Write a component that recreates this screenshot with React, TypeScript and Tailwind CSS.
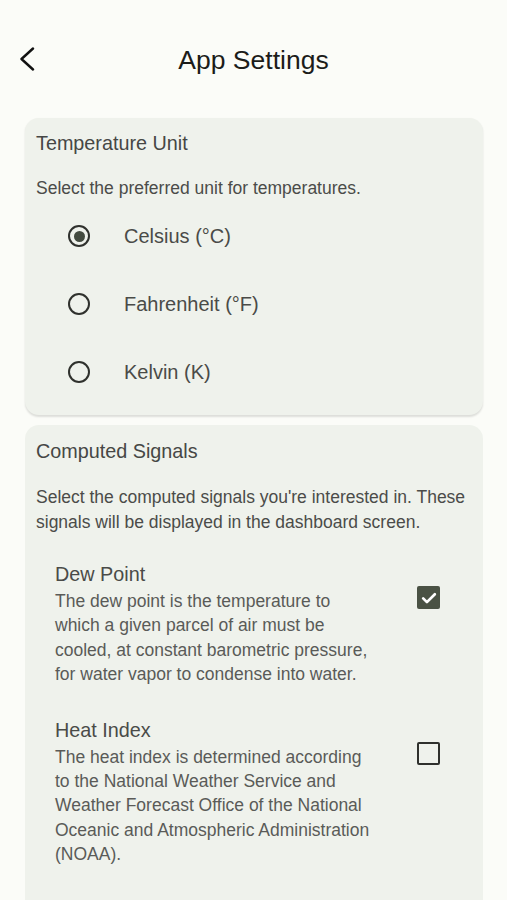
import React, { useState } from 'react';

const units = ['Celsius (°C)', 'Fahrenheit (°F)', 'Kelvin (K)'];

const signals = [
  {
    title: 'Dew Point',
    description:
      'The dew point is the temperature to which a given parcel of air must be cooled, at constant barometric pressure, for water vapor to condense into water.',
    checked: true,
  },
  {
    title: 'Heat Index',
    description:
      'The heat index is determined according to the National Weather Service and Weather Forecast Office of the National Oceanic and Atmospheric Administration (NOAA).',
    checked: false,
  },
];

function Radio({ selected }: { selected: boolean }) {
  return (
    <span className="flex h-[22px] w-[22px] items-center justify-center rounded-full border-[2.5px] border-[#2f312d]">
      {selected && <span className="h-[11px] w-[11px] rounded-full bg-[#434a3f]" />}
    </span>
  );
}

function Checkbox({ checked }: { checked: boolean }) {
  if (checked) {
    return (
      <span className="flex h-[23px] w-[23px] items-center justify-center rounded-[2px] bg-[#4a5244]">
        <svg viewBox="0 0 24 24" className="h-[20px] w-[20px]" fill="none" stroke="white" strokeWidth="3.2" strokeLinecap="round" strokeLinejoin="round">
          <path d="M5 12.5l4.5 4.5L19 7.5" />
        </svg>
      </span>
    );
  }
  return <span className="block h-[23px] w-[23px] rounded-[2px] border-[2.5px] border-[#2f312d]" />;
}

export default function App() {
  const [unit, setUnit] = useState(0);

  return (
    <div className="min-h-[900px] bg-[#fbfcf8] font-['Liberation_Sans',Arial,sans-serif] text-[#1c1c1a]">
      <header className="relative flex h-[118px] items-start pt-[44px]">
        <button className="absolute left-[19px] top-[47px] p-0">
          <svg viewBox="0 0 16 24" className="h-[24px] w-[16px]" fill="none" stroke="#111" strokeWidth="2.4" strokeLinecap="round" strokeLinejoin="round">
            <path d="M14 1.5L2.5 12L14 22.5" />
          </svg>
        </button>
        <h1 className="w-full text-center text-[26.5px] leading-[32px]">App Settings</h1>
      </header>

      <div className="flex flex-col gap-[10px] pl-[25px] pr-[24px]">
        <section className="rounded-[14px] bg-[#eff2ec] pb-[9px] pt-[12px] shadow-[0_1.5px_2px_rgba(0,0,0,0.12)]">
          <h2 className="px-[11px] text-[19.8px] leading-[26px] text-[#464745]">Temperature Unit</h2>
          <p className="mt-[21px] px-[11px] text-[17.5px] leading-[22px] text-[#4b4c49]">
            Select the preferred unit for temperatures.
          </p>
          <div className="mt-[3px] flex flex-col">
            {units.map((u, i) => (
              <button
                key={u}
                onClick={() => setUnit(i)}
                className="flex h-[68px] items-center text-left"
              >
                <span className="ml-[43px] mr-[34px]">
                  <Radio selected={unit === i} />
                </span>
                <span className="text-[20px] text-[#4a4b48]">{u}</span>
              </button>
            ))}
          </div>
        </section>

        <section className="rounded-t-[14px] bg-[#eff2ec] pb-[40px] pt-[13px]">
          <h2 className="px-[11px] text-[19.8px] leading-[26px] text-[#464745]">Computed Signals</h2>
          <p className="mt-[21px] px-[11px] text-[17.5px] leading-[24.5px] text-[#4b4c49]">
            Select the computed signals you're interested in. These signals will be displayed in the dashboard screen.
          </p>
          <div className="mt-[28px] flex flex-col gap-[31px]">
            {signals.map((s) => (
              <div key={s.title} className="flex items-start pl-[30px]">
                <div className="w-[322px]">
                  <h3 className="text-[19.8px] leading-[24px] text-[#4a4b48]">{s.title}</h3>
                  <p className="mt-[3px] text-[17.5px] leading-[24.4px] text-[#5a5b58]">{s.description}</p>
                </div>
                <div className="ml-[40px] mt-[24px]">
                  <Checkbox checked={s.checked} />
                </div>
              </div>
            ))}
          </div>
        </section>
      </div>
    </div>
  );
}
